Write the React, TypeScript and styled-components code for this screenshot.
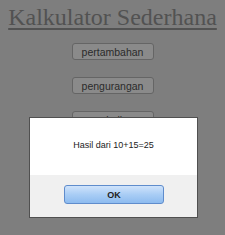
import styled, { createGlobalStyle } from 'styled-components';

const GlobalStyle = createGlobalStyle`
  html, body {
    margin: 0;
    padding: 0;
    background: #7e7e7e;
  }
`;

const labels = ['pertambahan', 'pengurangan', 'perkalian'];

export default function App() {
  return (
    <>
      <GlobalStyle />
      <Page>
        <Title>Kalkulator Sederhana</Title>
        <ButtonList>
          {labels.map((l) => (
            <OpButton key={l}>{l}</OpButton>
          ))}
        </ButtonList>
      </Page>
      <Dialog>
        <Message>Hasil dari 10+15=25</Message>
        <Footer>
          <OkButton>OK</OkButton>
        </Footer>
      </Dialog>
    </>
  );
}

const Page = styled.div`
  width: 225px;
  height: 235px;
  display: flex;
  flex-direction: column;
  align-items: center;
  padding-top: 4px;
  box-sizing: border-box;
  overflow: hidden;
`;
const Title = styled.h1`
  margin: 0;
  font-family: 'Liberation Serif', serif;
  font-weight: 400;
  font-size: 24px;
  line-height: 26px;
  color: #525252;
  text-decoration: underline;
  text-underline-offset: 3px;
  white-space: nowrap;
`;
const ButtonList = styled.div`
  display: flex;
  flex-direction: column;
  align-items: center;
  gap: 17px;
  margin-top: 13px;
`;
const OpButton = styled.button`
  width: 82px;
  height: 17px;
  padding: 0;
  border: 1px solid #656565;
  border-radius: 3px;
  background: #8a8a8a;
  font-family: 'Liberation Sans', Arial, sans-serif;
  font-size: 10.5px;
  color: #2a2a2a;
`;
const Dialog = styled.div`
  position: fixed;
  left: 29px;
  top: 117px;
  width: 169px;
  height: 101px;
  box-sizing: border-box;
  border: 1px solid #505050;
  background: #fff;
  display: flex;
  flex-direction: column;
  font-family: 'Liberation Sans', Arial, sans-serif;
`;
const Message = styled.div`
  height: 57px;
  display: flex;
  align-items: center;
  justify-content: center;
  font-size: 9px;
  color: #222;
  padding-bottom: 3px;
  box-sizing: border-box;
`;
const Footer = styled.div`
  flex: 1;
  background: #f0f0f0;
  display: flex;
  justify-content: center;
  padding-top: 10px;
  padding-left: 1px;
`;
const OkButton = styled.button`
  width: 100px;
  height: 19px;
  padding: 0;
  border: 1px solid #5f8ccc;
  border-radius: 3px;
  background: linear-gradient(#cfe3fb, #a9cdf5 50%, #8dbbef);
  font-family: 'Liberation Sans', Arial, sans-serif;
  font-weight: 700;
  font-size: 9px;
  color: #222;
`;
